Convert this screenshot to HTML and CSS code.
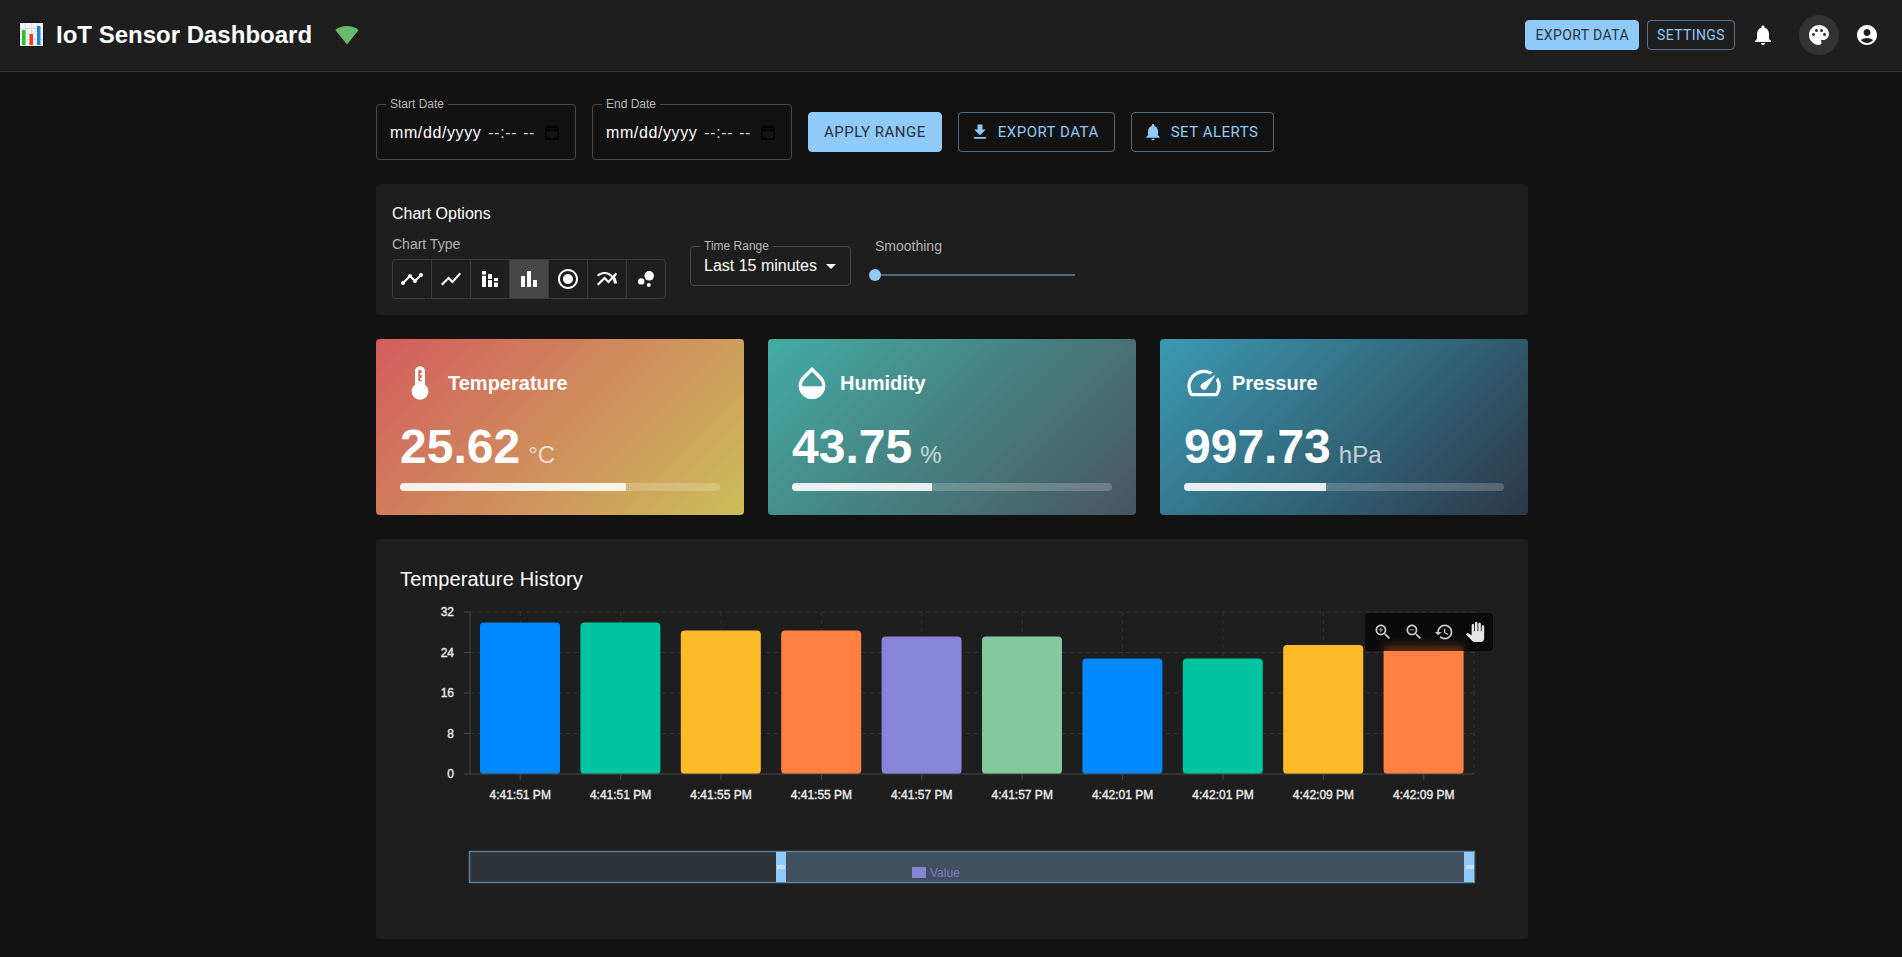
FILE: index.html
```
<!DOCTYPE html>
<html lang="en">
<head>
<meta charset="utf-8">
<title>IoT Sensor Dashboard</title>
<link rel="stylesheet" href="styles.css">
</head>
<body>
<header class="appbar">
  <div class="brand">
    <svg class="emoji" viewBox="0 0 25 25"><rect x="0.5" y="0.5" width="24" height="24" fill="#f4f4f4" stroke="#111"/><path d="M1 6.5h23M1 12h23M1 17.5h23M6.500 1v23M12.500 1v23M18.500 1v23" stroke="#ddd" stroke-width="1"/><rect x="3" y="8" width="3.500" height="15" fill="#22c532"/><rect x="10.500" y="12" width="3.500" height="11" fill="#f03a1c"/><rect x="18" y="4" width="3.500" height="19" fill="#1a84e0"/></svg>
    <h1 class="brand-title">IoT Sensor Dashboard</h1>
    <svg class="wifi" viewBox="0 0 24 24"><path d="M12.010 21.490 23.640 7c-.45-.34-4.930-4-11.640-4C5.280 3 .81 6.660.36 7l11.640 14.500.01-.01z"/></svg>
  </div>
  <div class="appbar-actions">
    <button class="btn btn-small btn-filled">EXPORT DATA</button>
    <button class="btn btn-small btn-outline">SETTINGS</button>
    <span class="icon-btn first"><svg viewBox="0 0 24 24"><path d="M12 22c1.100 0 2-.9 2-2h-4c0 1.100.89 2 2 2zm6-6v-5c0-3.070-1.640-5.640-4.500-6.320V4c0-.83-.67-1.500-1.500-1.500s-1.500.67-1.500 1.500v.68C7.630 5.360 6 7.920 6 11v5l-2 2v1h16v-1l-2-2z"/></svg></span>
    <span class="icon-btn active"><svg viewBox="0 0 24 24"><path d="M12 2C6.490 2 2 6.490 2 12s4.490 10 10 10c1.380 0 2.500-1.120 2.500-2.500 0-.61-.23-1.200-.64-1.670-.08-.1-.13-.21-.13-.33 0-.28.22-.5.5-.5H16c3.310 0 6-2.690 6-6 0-4.960-4.490-9-10-9zm5.500 11c-.83 0-1.500-.67-1.500-1.500s.67-1.500 1.500-1.500 1.500.67 1.500 1.500-.67 1.500-1.500 1.500zm-3-4c-.83 0-1.500-.67-1.500-1.500S13.670 6 14.500 6s1.500.67 1.500 1.500S15.330 9 14.500 9zM5 11.500c0-.83.67-1.500 1.500-1.500s1.500.67 1.500 1.500S7.330 13 6.500 13 5 12.330 5 11.500zm6-4c0 .83-.67 1.500-1.500 1.500S8 8.330 8 7.500 8.670 6 9.500 6s1.500.67 1.500 1.500z"/></svg></span>
    <span class="icon-btn"><svg viewBox="0 0 24 24"><path d="M12 2C6.480 2 2 6.480 2 12s4.480 10 10 10 10-4.480 10-10S17.520 2 12 2zm0 4c1.930 0 3.500 1.570 3.500 3.500S13.930 13 12 13s-3.500-1.570-3.500-3.500S10.070 6 12 6zm0 14c-2.030 0-4.430-.82-6.140-2.880C7.550 15.800 9.680 15 12 15s4.450.8 6.140 2.120C16.430 19.180 14.030 20 12 20z"/></svg></span>
  </div>
</header>

<main class="container">
  <section class="range-row">
    <fieldset class="field date-field"><legend>Start Date</legend>
      <span class="date-mask">mm/dd/yyyy</span><span class="time-mask">--:-- --</span>
      <svg class="calendar" viewBox="0 0 14 15"><path d="M3.500 0v2.500M10.500 0v2.500" stroke-width="1.500"/><rect x="1" y="2" width="12" height="12" rx="1"/><path d="M1 5h12" stroke-width="2"/></svg>
    </fieldset>
    <fieldset class="field date-field"><legend>End Date</legend>
      <span class="date-mask">mm/dd/yyyy</span><span class="time-mask">--:-- --</span>
      <svg class="calendar" viewBox="0 0 14 15"><path d="M3.500 0v2.500M10.500 0v2.500" stroke-width="1.500"/><rect x="1" y="2" width="12" height="12" rx="1"/><path d="M1 5h12" stroke-width="2"/></svg>
    </fieldset>
    <button class="btn btn-large btn-filled">APPLY RANGE</button>
    <button class="btn btn-large btn-outline"><svg class="btn-icon" viewBox="0 0 24 24"><path d="M19 9h-4V3H9v6H5l7 7 7-7zM5 18v2h14v-2H5z"/></svg>EXPORT DATA</button>
    <button class="btn btn-large btn-outline"><svg class="btn-icon" viewBox="0 0 24 24"><path d="M12 22c1.100 0 2-.9 2-2h-4c0 1.100.89 2 2 2zm6-6v-5c0-3.070-1.640-5.640-4.500-6.320V4c0-.83-.67-1.500-1.500-1.500s-1.500.67-1.500 1.500v.68C7.630 5.360 6 7.920 6 11v5l-2 2v1h16v-1l-2-2z"/></svg>SET ALERTS</button>
  </section>

  <section class="panel options">
    <h2 class="options-title">Chart Options</h2>
    <div class="options-row">
      <div class="option-type">
        <div class="caption type-label">Chart Type</div>
        <div class="toggle-group">
          <span class="toggle"><svg viewBox="0 0 24 24"><path d="M23 8c0 1.100-.9 2-2 2-.18 0-.35-.02-.51-.07l-3.560 3.550c.05.16.07.34.07.52 0 1.100-.9 2-2 2s-2-.9-2-2c0-.18.02-.36.07-.52l-2.550-2.550c-.16.05-.34.07-.52.07s-.36-.02-.52-.07l-4.550 4.560c.05.16.07.33.07.51 0 1.100-.9 2-2 2s-2-.9-2-2 .9-2 2-2c.18 0 .35.02.51.07l4.560-4.550C8.020 9.360 8 9.180 8 9c0-1.100.9-2 2-2s2 .9 2 2c0 .18-.02.36-.07.52l2.550 2.550c.16-.05.34-.07.52-.07s.36.02.52.07l3.550-3.560C19.020 8.350 19 8.180 19 8c0-1.100.9-2 2-2s2 .9 2 2z"/></svg></span>
          <span class="toggle"><svg viewBox="0 0 24 24"><path d="M3.500 18.490l6-6.010 4 4L22 6.920l-1.410-1.410-7.090 7.970-4-4L2 16.990z"/></svg></span>
          <span class="toggle"><svg viewBox="0 0 24 24"><path d="M4 4h4v3.500H4zM4 8.700h4V20H4zM10 7h4v5h-4zM10 13h4v7h-4zM16 11h4v3h-4zM16 15.500h4V20h-4z"/></svg></span>
          <span class="toggle selected"><svg viewBox="0 0 24 24"><path d="M4 9h4v11H4zm12 4h4v7h-4zm-6-9h4v16h-4z"/></svg></span>
          <span class="toggle"><svg viewBox="0 0 24 24"><path d="M12 7c-2.760 0-5 2.240-5 5s2.240 5 5 5 5-2.240 5-5-2.240-5-5-5zm0-5C6.480 2 2 6.480 2 12s4.480 10 10 10 10-4.480 10-10S17.520 2 12 2zm0 18c-4.420 0-8-3.580-8-8s3.580-8 8-8 8 3.580 8 8-3.580 8-8 8z"/></svg></span>
          <span class="toggle"><svg viewBox="0 0 24 24"><path d="M22 6.920l-1.410-1.410-2.850 3.210C15.680 6.400 12.830 5 9.610 5 6.720 5 4.070 6.160 2 8l1.420 1.420C5.120 7.930 7.270 7 9.610 7c2.740 0 5.090 1.260 6.770 3.240l-2.880 3.240-4-4L2 16.990l1.500 1.500 6-6.010 4 4 4.050-4.550c.75 1.350 1.250 2.900 1.440 4.550H22c-.22-2.300-.95-4.390-2.040-6.140L22 6.920z"/></svg></span>
          <span class="toggle"><svg viewBox="0 0 24 24"><circle cx="7.200" cy="14.400" r="3.200"/><circle cx="14.800" cy="18" r="2"/><circle cx="15.200" cy="8.800" r="4.800"/></svg></span>
        </div>
      </div>
      <fieldset class="field select-field"><legend>Time Range</legend><span class="select-value">Last 15 minutes</span><span class="caret"></span></fieldset>
      <div class="slider-block">
        <div class="caption slider-label">Smoothing</div>
        <div class="slider"><span class="slider-thumb"></span></div>
      </div>
    </div>
  </section>

  <section class="cards">
    <article class="card card-temp">
      <div class="card-head"><svg viewBox="0 0 24 24"><path d="M15 13V5c0-1.660-1.340-3-3-3S9 3.340 9 5v8c-1.210.91-2 2.370-2 4 0 2.760 2.240 5 5 5s5-2.240 5-5c0-1.630-.79-3.090-2-4zm-4-2V5c0-.55.45-1 1-1s1 .45 1 1v1h-1v1h1v2h-1v1h1v1h-2z"/></svg><h3>Temperature</h3></div>
      <div class="reading"><span class="value">25.62</span><span class="unit">°C</span></div>
      <div class="progress"><div class="progress-fill" style="width:70.7%"></div></div>
    </article>
    <article class="card card-humidity">
      <div class="card-head"><svg viewBox="0 0 24 24"><path d="M17.660 8 12 2.350 6.340 8C4.780 9.560 4 11.640 4 13.640s.78 4.110 2.340 5.670 3.610 2.350 5.660 2.350 4.100-.79 5.660-2.350S20 15.640 20 13.640 19.220 9.560 17.660 8zM6 14c.01-2 .62-3.270 1.760-4.400L12 5.270l4.240 4.380C17.380 10.770 17.990 12 18 14H6z"/></svg><h3>Humidity</h3></div>
      <div class="reading"><span class="value">43.75</span><span class="unit">%</span></div>
      <div class="progress"><div class="progress-fill" style="width:43.75%"></div></div>
    </article>
    <article class="card card-pressure">
      <div class="card-head"><svg viewBox="0 0 24 24"><path d="M20.380 8.570l-1.230 1.850a8 8 0 0 1-.22 7.580H5.070A8 8 0 0 1 15.580 6.850l1.850-1.230A10 10 0 0 0 3.350 19a2 2 0 0 0 1.720 1h13.850a2 2 0 0 0 1.740-1 10 10 0 0 0-.27-10.440zm-9.790 6.840a2 2 0 0 0 2.830 0l5.660-8.490-8.490 5.660a2 2 0 0 0 0 2.830z"/></svg><h3>Pressure</h3></div>
      <div class="reading"><span class="value">997.73</span><span class="unit">hPa</span></div>
      <div class="progress"><div class="progress-fill" style="width:44.3%"></div></div>
    </article>
  </section>

  <section class="panel chart-panel">
    <h2 class="chart-title">Temperature History</h2>
    <div class="chart-canvas">
      <svg class="chart-svg" viewBox="0 0 1152 320" width="1152" height="320">
        <g class="grid">
          <path d="M94 33H1098M94 73.500H1098M94 114H1098M94 154.500H1098"/>
          <path d="M144.200 33V195M244.600 33V195M345 33V195M445.400 33V195M545.800 33V195M646.200 33V195M746.600 33V195M847 33V195M947.400 33V195M1047.800 33V195M1098 33V195"/>
        </g>
        <g class="bars">
          <rect x="104" y="43.500" width="80" height="151.500" rx="4" fill="#0088fe"/>
          <rect x="204.400" y="43.500" width="80" height="151.500" rx="4" fill="#00c49f"/>
          <rect x="304.800" y="51.500" width="80" height="143.500" rx="4" fill="#ffbb28"/>
          <rect x="405.200" y="51.500" width="80" height="143.500" rx="4" fill="#ff8042"/>
          <rect x="505.600" y="57.500" width="80" height="137.500" rx="4" fill="#8884d8"/>
          <rect x="606" y="57.500" width="80" height="137.500" rx="4" fill="#82ca9d"/>
          <rect x="706.400" y="79.500" width="80" height="115.500" rx="4" fill="#0088fe"/>
          <rect x="806.800" y="79.500" width="80" height="115.500" rx="4" fill="#00c49f"/>
          <rect x="907.200" y="66" width="80" height="129" rx="4" fill="#ffbb28"/>
          <rect x="1007.600" y="66" width="80" height="129" rx="4" fill="#ff8042"/>
        </g>
        <g class="axis">
          <path d="M94 33V195M88 33H94M88 73.500H94M88 114H94M88 154.500H94M88 195H1098"/>
          <path d="M144.200 195v6M244.600 195v6M345 195v6M445.400 195v6M545.800 195v6M646.200 195v6M746.600 195v6M847 195v6M947.400 195v6M1047.800 195v6"/>
        </g>
        <g class="y-labels">
          <text x="78" y="37">32</text><text x="78" y="77.500">24</text><text x="78" y="118">16</text><text x="78" y="158.500">8</text><text x="78" y="199">0</text>
        </g>
        <g class="x-labels">
          <text x="144.200" y="220">4:41:51 PM</text><text x="244.600" y="220">4:41:51 PM</text><text x="345" y="220">4:41:55 PM</text><text x="445.400" y="220">4:41:55 PM</text><text x="545.800" y="220">4:41:57 PM</text><text x="646.200" y="220">4:41:57 PM</text><text x="746.600" y="220">4:42:01 PM</text><text x="847" y="220">4:42:01 PM</text><text x="947.400" y="220">4:42:09 PM</text><text x="1047.800" y="220">4:42:09 PM</text>
        </g>
        <g class="zoom-slider">
          <rect class="zoom-track" x="94" y="273" width="1005" height="30"/>
          <rect class="zoom-window" x="400" y="273" width="698" height="30"/>
          <rect class="zoom-frame" x="93.500" y="272.500" width="1005" height="31"/>
          <rect class="zoom-handle" x="400" y="273" width="10" height="30"/>
          <rect class="zoom-handle" x="1088" y="273" width="10" height="30"/>
          <rect class="zoom-grip" x="401" y="286" width="8" height="4"/>
          <rect class="zoom-grip" x="1090" y="286" width="8" height="4"/>
        </g>
        <rect class="legend-swatch" x="536" y="288" width="14" height="11"/>
        <text class="legend-text" x="554" y="298">Value</text>
      </svg>
      <div class="chart-tools">
        <svg viewBox="0 0 24 24"><path d="M15.500 14h-.79l-.28-.27C15.410 12.590 16 11.110 16 9.500 16 5.910 13.090 3 9.500 3S3 5.910 3 9.500 5.910 16 9.500 16c1.610 0 3.090-.59 4.230-1.570l.27.28v.79l5 4.990L20.490 19l-4.990-5zm-6 0C7.010 14 5 11.990 5 9.500S7.010 5 9.500 5 14 7.010 14 9.500 11.990 14 9.500 14zM12 10h-2v2H9v-2H7V9h2V7h1v2h2v1z"/></svg>
        <svg viewBox="0 0 24 24"><path d="M15.500 14h-.79l-.28-.27C15.410 12.590 16 11.110 16 9.500 16 5.910 13.090 3 9.500 3S3 5.910 3 9.500 5.910 16 9.500 16c1.610 0 3.090-.59 4.230-1.570l.27.28v.79l5 4.990L20.490 19l-4.990-5zm-6 0C7.010 14 5 11.990 5 9.500S7.010 5 9.500 5 14 7.010 14 9.500 11.990 14 9.500 14zM7 9h5v1H7z"/></svg>
        <svg viewBox="0 0 24 24"><path d="M13 3c-4.970 0-9 4.030-9 9H1l3.890 3.890.07.14L9 12H6c0-3.870 3.130-7 7-7s7 3.130 7 7-3.130 7-7 7c-1.930 0-3.680-.79-4.940-2.060l-1.420 1.420C8.270 19.990 10.510 21 13 21c4.970 0 9-4.030 9-9s-4.030-9-9-9zm-1 5v5l4.280 2.540.72-1.210-3.500-2.080V8H12z"/></svg>
        <svg class="tool-active" viewBox="0 0 24 24"><path d="M23 5.500V20c0 2.200-1.800 4-4 4h-7.300c-1.080 0-2.100-.43-2.850-1.190L1 14.830s1.260-1.230 1.300-1.250c.22-.19.49-.29.79-.29.22 0 .42.06.6.16.04.01 4.310 2.460 4.310 2.460V4c0-.83.67-1.500 1.500-1.500S11 3.170 11 4v7h1V1.500c0-.83.67-1.500 1.500-1.500S15 .67 15 1.500V11h1V2.500c0-.83.67-1.500 1.500-1.500s1.500.67 1.500 1.500V11h1V5.500c0-.83.67-1.500 1.500-1.500s1.500.67 1.500 1.500z"/></svg>
      </div>
    </div>
  </section>
</main>
</body>
</html>
```
FILE: styles.css
```
* { box-sizing: border-box; }
html, body { margin: 0; padding: 0; height: 100%; overflow: hidden; }
body { background: #121212; color: #fff; font-family: "Liberation Sans", Arial, sans-serif; }
h1, h2, h3 { margin: 0; font-weight: 400; }

.appbar { height: 72px; background: #1e1e1e; border-bottom: 1px solid #333; display: flex; align-items: center; justify-content: space-between; padding: 0 15px 2px 19px; }
.brand { display: flex; align-items: center; }
.emoji { width: 25px; height: 25px; margin-right: 12px; }
.brand-title { font-size: 24px; font-weight: 700; line-height: 32px; }
.wifi { width: 24px; height: 24px; margin-left: 23px; fill: #66bb6a; }
.appbar-actions { display: flex; align-items: center; gap: 8px; }
.icon-btn { width: 40px; height: 40px; border-radius: 50%; display: flex; align-items: center; justify-content: center; }
.icon-btn svg { width: 24px; height: 24px; fill: #fff; }
.icon-btn.first { margin-right: 8px; }
.icon-btn.active { background: #333; }

.btn { font-family: Roboto, sans-serif; font-weight: 400; border-radius: 4px; display: inline-flex; align-items: center; justify-content: center; white-space: nowrap; cursor: pointer; }
.btn-small { height: 30px; padding: 0 9px; font-size: 14px; letter-spacing: .4px; }
.btn-large { height: 40px; padding: 0 15px; font-size: 15px; letter-spacing: .5px; }
.btn-filled { background: #90caf9; border: 1px solid #90caf9; color: #29323a; }
.btn-outline { background: transparent; border: 1px solid rgba(144,202,249,.5); color: #90caf9; }
.btn-icon { width: 20px; height: 20px; fill: currentColor; margin-right: 8px; margin-left: -4px; }

.container { width: 1152px; margin-left: 376px; padding-top: 32px; display: flex; flex-direction: column; }
.range-row { display: flex; align-items: center; gap: 16px; height: 56px; margin-bottom: 24px; }

.field { margin: 0; border: 1px solid #4a4a4a; border-radius: 4px; min-width: 0; padding: 0 13px; }
.field legend { font-size: 12px; line-height: 12px; color: #b8b8b8; padding: 0 4px; margin-left: -4px; }
.date-field { width: 200px; height: 62px; align-self: flex-end; display: flex; align-items: center; }
.date-mask { font-size: 16px; line-height: 24px; margin-top: -4px; letter-spacing: .6px; }
.time-mask { font-size: 16px; line-height: 24px; margin-top: -4px; margin-left: 7px; color: #cfcfcf; word-spacing: 1px; letter-spacing: .6px; }
.calendar { width: 14px; height: 15px; margin-left: auto; margin-right: 3px; margin-top: -4px; fill: none; stroke: #000; stroke-width: 1.500; }

.panel { background: #1e1e1e; border-radius: 4px; }
.options { height: 131px; padding: 16px; margin-bottom: 24px; }
.options-title { font-size: 16px; line-height: 24px; padding-top: 2px; margin-bottom: 8px; }
.options-row { display: flex; align-items: flex-start; }
.caption { font-size: 14px; color: #b3b3b3; }
.type-label { line-height: 20px; }
.option-type { width: 298px; }
.toggle-group { display: flex; margin-top: 5px; width: 274px; height: 40px; border: 1px solid #3c3c3c; border-radius: 4px; }
.toggle { flex: 1; display: flex; align-items: center; justify-content: center; border-left: 1px solid #3c3c3c; }
.toggle:first-child { border-left: 0; }
.toggle svg { width: 24px; height: 24px; fill: #fff; }
.toggle.selected { background: #474747; }

.select-field { width: 161px; height: 46px; margin-top: 6px; display: flex; align-items: center; }
.select-value { font-size: 16px; line-height: 24px; margin-top: -5px; }
.caret { width: 0; height: 0; border-left: 5px solid transparent; border-right: 5px solid transparent; border-top: 5px solid #fff; margin-left: 9px; margin-top: -5px; }
.slider-block { margin-left: 24px; width: 200px; }
.slider-label { line-height: 16px; margin-top: 4px; }
.slider { height: 2px; width: 200px; background: #4d6a82; margin-top: 20px; position: relative; }
.slider-thumb { position: absolute; left: -6px; top: -5px; width: 12px; height: 12px; border-radius: 50%; background: #90caf9; }

.cards { display: grid; grid-template-columns: repeat(3, 368px); gap: 24px; margin-bottom: 24px; }
.card { height: 176px; border-radius: 4px; padding: 24px; }
.card-temp { background: linear-gradient(135deg, #d35c5e, #ccbd5a); }
.card-humidity { background: linear-gradient(135deg, #43aca4, #4a5560); }
.card-pressure { background: linear-gradient(135deg, #3a9ab2, #2c3848); }
.card-head { display: flex; align-items: center; gap: 8px; height: 40px; }
.card-head svg { width: 40px; height: 40px; fill: #fff; }
.card-head h3 { font-size: 20px; font-weight: 700; }
.reading { display: flex; align-items: baseline; margin-top: 16px; height: 56px; line-height: 56px; }
.value { font-size: 48px; font-weight: 700; }
.unit { font-size: 24px; margin-left: 8px; opacity: .7; }
.progress { height: 8px; border-radius: 4px; background: rgba(255,255,255,.2); overflow: hidden; margin-top: 8px; }
.progress-fill { height: 100%; background: rgba(255,255,255,.85); }

.chart-panel { height: 400px; padding: 24px 0 0; }
.chart-title { font-size: 20px; line-height: 32px; padding-left: 24px; letter-spacing: .15px; }
.chart-canvas { position: relative; width: 1152px; height: 320px; }
.chart-svg { display: block; margin-top: -16px; }
.grid path { fill: none; stroke: #333; stroke-dasharray: 4 4; }
.axis path { fill: none; stroke: #484848; stroke-width: 1; }
.y-labels text { font: 12px "Liberation Sans", Arial, sans-serif; fill: #eee; stroke: #eee; stroke-width: .35px; text-anchor: end; }
.x-labels text { font: 12px "Liberation Sans", Arial, sans-serif; fill: #eee; stroke: #eee; stroke-width: .35px; text-anchor: middle; }
.zoom-track { fill: #2d3338; }
.zoom-window { fill: #41505f; }
.zoom-frame { fill: none; stroke: #5d7f99; stroke-width: 1.5; }
.zoom-handle { fill: #90caf9; }
.zoom-grip { fill: #c5e1f8; }
.legend-swatch { fill: #8884d8; }
.legend-text { font: 12px "Liberation Sans", Arial, sans-serif; fill: #7f7bc8; }

.chart-tools { position: absolute; left: 989px; top: 34px; width: 128px; height: 38px; border-radius: 4px; background: rgba(0,0,0,.65); backdrop-filter: blur(4px); display: flex; align-items: center; justify-content: space-between; padding: 0 8px; }
.chart-tools svg { width: 20px; height: 20px; fill: #ccc; }
.chart-tools .tool-active { fill: #e6e6e6; }
```
